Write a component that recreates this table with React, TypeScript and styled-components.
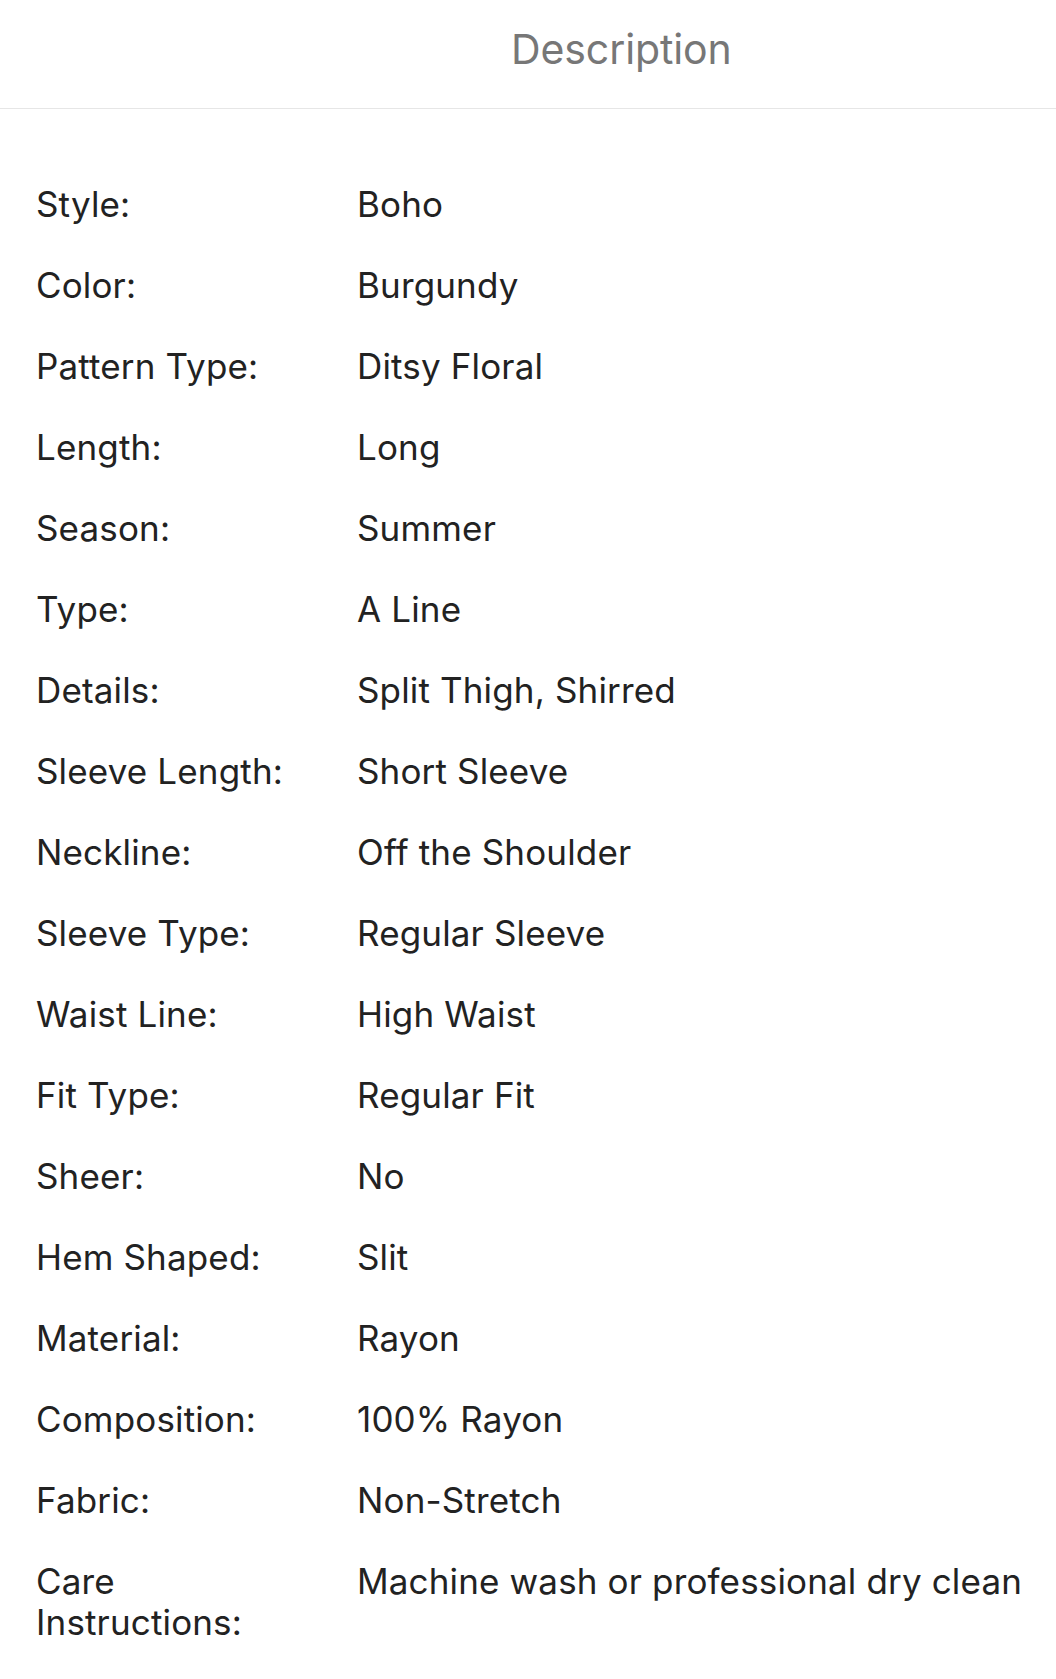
import React from "react";
import styled, { createGlobalStyle } from "styled-components";

const GlobalStyle = createGlobalStyle`
  html, body {
    margin: 0;
    padding: 0;
    background: #ffffff;
  }
  body {
    font-family: Inter, "Noto Sans", "Liberation Sans", sans-serif;
    -webkit-font-smoothing: antialiased;
  }
`;

const Page = styled.div`
  width: 1056px;
  background: #ffffff;
`;

const TabBar = styled.div`
  display: flex;
  align-items: flex-start;
  height: 108px;
  padding-left: 511px;
  border-bottom: 1px solid #e6e6e6;
  box-sizing: content-box;
`;

const Tab = styled.div`
  font-size: 41px;
  line-height: 50px;
  padding-top: 24px;
  color: #777777;
  letter-spacing: -0.1px;
`;

const List = styled.div`
  display: flex;
  flex-direction: column;
  padding: 55px 0 40px 36px;
`;

const Row = styled.div`
  display: grid;
  grid-template-columns: 262px 1fr;
  column-gap: 59px;
  padding: 20px 0;
  font-size: 35px;
  line-height: 41px;
  color: #222222;
`;

const Label = styled.div`
  letter-spacing: 0.15px;
`;

const Value = styled.div`
  letter-spacing: 0.15px;
`;

const specs: [string, string][] = [
  ["Style:", "Boho"],
  ["Color:", "Burgundy"],
  ["Pattern Type:", "Ditsy Floral"],
  ["Length:", "Long"],
  ["Season:", "Summer"],
  ["Type:", "A Line"],
  ["Details:", "Split Thigh, Shirred"],
  ["Sleeve Length:", "Short Sleeve"],
  ["Neckline:", "Off the Shoulder"],
  ["Sleeve Type:", "Regular Sleeve"],
  ["Waist Line:", "High Waist"],
  ["Fit Type:", "Regular Fit"],
  ["Sheer:", "No"],
  ["Hem Shaped:", "Slit"],
  ["Material:", "Rayon"],
  ["Composition:", "100% Rayon"],
  ["Fabric:", "Non-Stretch"],
  ["Care Instructions:", "Machine wash or professional dry clean"],
];

export default function App() {
  return (
    <Page>
      <GlobalStyle />
      <TabBar>
        <Tab>Description</Tab>
      </TabBar>
      <List>
        {specs.map(([label, value]) => (
          <Row key={label}>
            <Label>{label}</Label>
            <Value>{value}</Value>
          </Row>
        ))}
      </List>
    </Page>
  );
}
